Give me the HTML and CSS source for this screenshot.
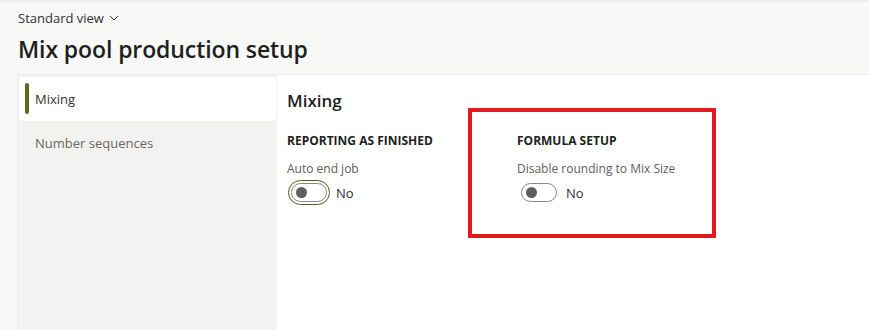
FILE: index.html
```html
<!DOCTYPE html>
<html>
<head>
<meta charset="utf-8">
<link rel="stylesheet" href="styles.css">
</head>
<body>
<div class="page">
  <header class="header">
    <div class="view">Standard view <svg class="chev" width="10" height="10" viewBox="0 0 10 10"><path d="M1 3 L5 7 L9 3" fill="none" stroke="#323130" stroke-width="1"/></svg></div>
    <h1 class="title">Mix pool production setup</h1>
  </header>
  <main class="panel">
    <nav class="nav">
      <div class="nav-item active"><span class="bar"></span>Mixing</div>
      <div class="nav-item">Number sequences</div>
    </nav>
    <section class="content">
      <h2 class="heading">Mixing</h2>
      <div class="groups">
        <div class="group">
          <div class="group-title">REPORTING AS FINISHED</div>
          <div class="field-label">Auto end job</div>
          <div class="toggle-row">
            <span class="toggle focused"><span class="knob"></span></span>
            <span class="toggle-text">No</span>
          </div>
        </div>
        <div class="group">
          <div class="group-title">FORMULA SETUP</div>
          <div class="field-label">Disable rounding to Mix Size</div>
          <div class="toggle-row">
            <span class="toggle"><span class="knob"></span></span>
            <span class="toggle-text">No</span>
          </div>
        </div>
      </div>
    </section>
  </main>
  <div class="highlight"></div>
</div>
</body>
</html>
```

FILE: styles.css
```css
html, body {
  margin: 0;
  padding: 0;
  height: 100%;
}
body {
  background: #f8f8f7;
  font-family: "Open Sans", "Noto Sans", sans-serif;
  color: #323130;
  overflow: hidden;
}
.page {
  position: relative;
  height: 330px;
  border-top: 2px solid #efefee;
  box-sizing: border-box;
}
.header {
  padding: 8px 0 0 18px;
  height: 72px;
  box-sizing: border-box;
}
.view {
  font-size: 13px;
  line-height: 17px;
  color: #323130;
  display: flex;
  align-items: center;
  gap: 5px;
}
.chev { margin-top: -2px; }
.title {
  margin: 8px 0 0 0;
  font-size: 23px;
  line-height: 28px;
  font-weight: 600;
  color: #201f1e;
  letter-spacing: -0.1px;
}
.panel {
  margin-left: 17px;
  display: grid;
  grid-template-columns: 259px 1fr;
  height: 256px;
  border-top: 1px solid #ebebea;
  border-left: 1px solid #ebebea;
}
.nav {
  background: #f2f2f0;
  padding: 2px 1px 0 1px;
}
.nav-item {
  position: relative;
  height: 44px;
  display: flex;
  align-items: center;
  padding-left: 16px;
  font-size: 13px;
  color: #6a6560;
  border-radius: 4px;
}
.nav-item.active {
  background: #ffffff;
  color: #323130;
}
.bar {
  position: absolute;
  left: 6px;
  top: 6px;
  width: 4px;
  height: 31px;
  border-radius: 2px;
  background: #5b6a1b;
}
.content {
  background: #ffffff;
  padding: 14px 10px;
}
.heading {
  margin: 0;
  font-size: 17px;
  line-height: 24px;
  font-weight: 600;
  color: #201f1e;
}
.groups {
  display: flex;
  margin-top: 20px;
}
.group {
  width: 230px;
}
.group-title {
  font-size: 12px;
  line-height: 16px;
  font-weight: 700;
  color: #201f1e;
}
.field-label {
  margin-top: 12px;
  font-size: 12px;
  line-height: 16px;
  color: #605e5c;
}
.toggle-row {
  display: flex;
  align-items: center;
  margin-top: 6px;
  padding-left: 4px;
  gap: 9px;
}
.toggle {
  position: relative;
  width: 34px;
  height: 17px;
  border: 1px solid #8a8886;
  border-radius: 10px;
  background: #ffffff;
  box-sizing: content-box;
}
.toggle.focused {
  outline: 1px solid #4f5e16;
  outline-offset: 2px;
  border-radius: 10px;
}
.knob {
  position: absolute;
  left: 4px;
  top: 3px;
  width: 11px;
  height: 11px;
  border-radius: 50%;
  background: #605e5c;
}
.toggle-text {
  font-size: 13px;
  color: #323130;
}
.highlight {
  position: absolute;
  left: 468px;
  top: 106px;
  width: 248px;
  height: 130px;
  border: 4px solid #e31b20;
  box-sizing: border-box;
}
```
